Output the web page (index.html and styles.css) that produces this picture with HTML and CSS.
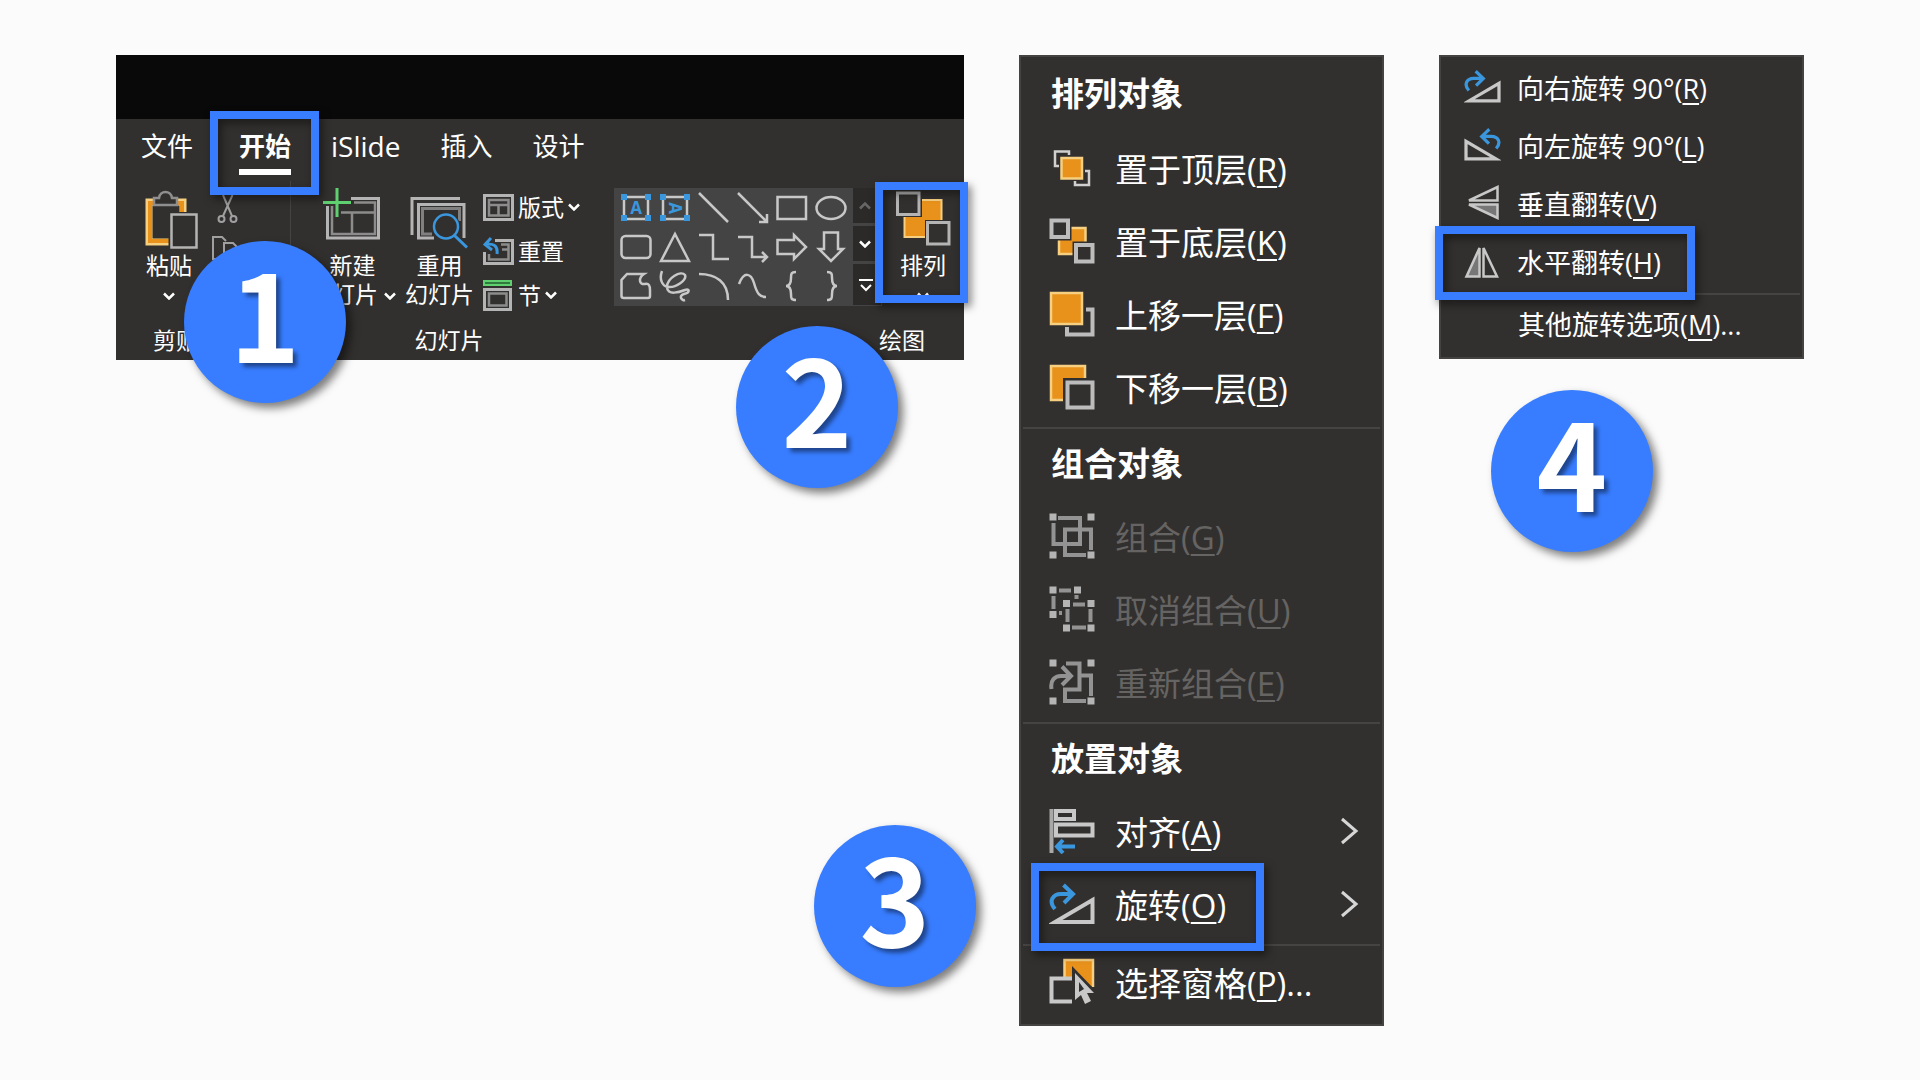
FILE: index.html
```html
<!DOCTYPE html>
<html lang="zh-CN">
<head>
    <meta charset="UTF-8">
    <title>水平翻转</title>
    <link rel="stylesheet" href="styles.css">
</head>
<body>
    <svg class="defs" aria-hidden="true">
        <symbol id="chevron" viewBox="0 0 12 8"><path d="M1 1.5L6 6.5L11 1.5" fill="none" stroke="currentColor" stroke-width="2.500"/></symbol>
        <symbol id="arrow" viewBox="0 0 20 28"><path d="M2 2L16 14L2 26" fill="none" stroke="#d6d6d6" stroke-width="3"/></symbol>
        <symbol id="rotate-right" viewBox="0 0 46 46">
            <path d="M6 41H43.500V19Z" fill="none" stroke="#c8c8c8" stroke-width="4"/>
            <path d="M6 28C-1 20 4 13 12 13H23M14.500 4L24 13L15 22" fill="none" stroke="#3a96dd" stroke-width="4"/>
        </symbol>
    </svg>

    <main class="page">
        <section class="panel ribbon">
            <div class="titlebar"></div>
            <nav class="tabs">
                <button class="tab">文件</button>
                <button class="tab active">开始<span class="mark mark-tab"></span></button>
                <button class="tab latin">iSlide</button>
                <button class="tab">插入</button>
                <button class="tab">设计</button>
            </nav>
            <div class="groups">
                <div class="group clipboard">
                    <div class="tools">
                        <button class="big">
                            <svg width="54" height="62" viewBox="0 -4 54 62" fill="none">
                                <path d="M38 22V11H4V51H24" stroke="#f6cf80" stroke-width="7"/>
                                <path d="M37 22V12H5V50H24" stroke="#e8921c" stroke-width="4"/>
                                <path d="M9 14V7H14C15 -1 26 -1 27 7H32V14Z" fill="#32302f" stroke="#8f8f8f" stroke-width="2.500"/>
                                <path d="M26 23.500H51.500V56.500H26Z" fill="#32302f" stroke="#32302f" stroke-width="5"/>
                                <path d="M26.500 23.500H51.500V56.500H26.500Z" fill="#32302f" stroke="#b4b4b4" stroke-width="2.500"/>
                            </svg>
                            <span>粘贴</span>
                            <span><svg class="chev"><use href="#chevron"/></svg></span>
                        </button>
                        <div class="edit">
                            <button aria-label="剪切"><svg width="21" height="28" viewBox="0 0 21 28" fill="none" stroke="#a0a0a0" stroke-width="2"><path d="M6 0L15 21M15.500 0L6 21"/><circle cx="4.500" cy="24" r="3"/><circle cx="16.500" cy="24" r="3"/></svg></button>
                            <button aria-label="复制"><svg width="28" height="30" viewBox="0 0 28 30" fill="none" stroke="#a0a0a0" stroke-width="2"><path d="M10 24H1V2H10L14 6M12 29V8H21L27 14V29Z"/></svg></button>
                        </div>
                    </div>
                    <div class="caption">剪贴板</div>
                </div>

                <div class="group slides">
                    <div class="tools">
                        <button class="big">
                            <svg width="60" height="62" viewBox="0 0 60 62" fill="none">
                                <path d="M29 11.500H56.500V51H5.500V19" stroke="#b4b4b4" stroke-width="3"/>
                                <path d="M32 15.500H53V47H10V19M19 25.500H53M30 25.500V47" stroke="#8c8c8c" stroke-width="2.500"/>
                                <path d="M15 1V30M1 15.500H29" stroke="#5fd070" stroke-width="3"/>
                            </svg>
                            <span>新建</span>
                            <span>幻灯片 <svg class="chev"><use href="#chevron"/></svg></span>
                        </button>
                        <button class="big">
                            <svg width="60" height="62" viewBox="0 -8 60 62" fill="none">
                                <path d="M3 40V3.500H51" stroke="#b4b4b4" stroke-width="3"/>
                                <path d="M25 43H9.500V9.500H55V43" stroke="#b4b4b4" stroke-width="3"/>
                                <path d="M23 39H13.500V13.500H50.500V26" stroke="#808080" stroke-width="3"/>
                                <circle cx="37" cy="31.500" r="14" fill="#32302f"/>
                                <path d="M46 41L58 53" stroke="#32302f" stroke-width="7"/>
                                <circle cx="37" cy="31.500" r="12" stroke="#3a96dd" stroke-width="2.500"/>
                                <path d="M45.500 40.500L58 52.500" stroke="#3a96dd" stroke-width="3"/>
                            </svg>
                            <span>重用</span>
                            <span>幻灯片</span>
                        </button>
                        <div class="list">
                            <button class="small">
                                <svg width="31" height="31" viewBox="0 0 31 31" fill="none">
                                    <path d="M1.500 3.500H29.500V27.500H1.500Z" stroke="#b4b4b4" stroke-width="3"/>
                                    <path d="M6 8H25.500V23.500H6ZM6 13H26M15.500 13V24" stroke="#8c8c8c" stroke-width="2.500"/>
                                </svg>
                                版式 <svg class="chev"><use href="#chevron"/></svg>
                            </button>
                            <button class="small">
                                <svg width="31" height="31" viewBox="0 0 31 31" fill="none">
                                    <path d="M12 4.500H29.500V27.500H1.500V16" stroke="#b4b4b4" stroke-width="3"/>
                                    <path d="M18 8.500H25.500V23.500H6V18M19 13.500H26" stroke="#8c8c8c" stroke-width="2.500"/>
                                    <path d="M8 2L2 8.500L9 14M2 8.500C11 7 15 10 14 18" stroke="#3a96dd" stroke-width="3"/>
                                </svg>
                                重置
                            </button>
                            <button class="small">
                                <svg width="31" height="31" viewBox="0 0 31 31" fill="none">
                                    <path d="M1 1H28V5H1Z" fill="#2f7a3c" stroke="#5fd070" stroke-width="2"/>
                                    <path d="M1.500 9.500H27.500V29.500H1.500Z" stroke="#b4b4b4" stroke-width="3"/>
                                    <path d="M6 13.500H23.500V25.500H6Z" stroke="#8c8c8c" stroke-width="2.500"/>
                                </svg>
                                节 <svg class="chev"><use href="#chevron"/></svg>
                            </button>
                        </div>
                    </div>
                    <div class="caption">幻灯片</div>
                </div>

                <div class="group drawing">
                    <div class="tools">
                        <div class="gallery">
                            <div class="shapes">
                                <button aria-label="文本框"><svg viewBox="0 0 32 32"><path d="M4 5H28V27H4Z"/><path class="handle" d="M1 2h6v6h-6zM25 2h6v6h-6zM1 23h6v6h-6zM25 23h6v6h-6z"/><text x="16" y="22">A</text></svg></button>
                                <button aria-label="竖排文本框"><svg viewBox="0 0 32 32"><path d="M4 5H28V27H4Z"/><path class="handle" d="M1 2h6v6h-6zM25 2h6v6h-6zM1 23h6v6h-6zM25 23h6v6h-6z"/><text x="16" y="22" transform="rotate(90 16 16)">A</text></svg></button>
                                <button aria-label="直线"><svg viewBox="0 0 32 32"><path d="M1 1L30 30"/></svg></button>
                                <button aria-label="箭头"><svg viewBox="0 0 32 32"><path d="M1 1L30 30M30 22V30H22"/></svg></button>
                                <button aria-label="矩形"><svg viewBox="0 0 32 32"><path d="M1.500 5H30V27H1.500Z"/></svg></button>
                                <button aria-label="椭圆"><svg viewBox="0 0 32 32"><ellipse cx="16" cy="16" rx="14.500" ry="11"/></svg></button>
                                <button aria-label="圆角矩形"><svg viewBox="0 0 32 32"><rect x="1.500" y="5" width="29" height="22" rx="4"/></svg></button>
                                <button aria-label="三角形"><svg viewBox="0 0 32 32"><path d="M16 3L30 30H2Z"/></svg></button>
                                <button aria-label="肘形连接符"><svg viewBox="0 0 32 32"><path d="M1 4H15V28H31"/></svg></button>
                                <button aria-label="肘形箭头"><svg viewBox="0 0 32 32"><path d="M1 6H15V26H30M25 21L30 26L25 31"/></svg></button>
                                <button aria-label="右箭头"><svg viewBox="0 0 32 32"><path d="M1.500 9H18V4L30 16L18 28V23H1.500Z"/></svg></button>
                                <button aria-label="下箭头"><svg viewBox="0 0 32 32"><path d="M9 1.500H23V18H28L16 30L4 18H9Z"/></svg></button>
                                <button aria-label="任意多边形"><svg viewBox="0 0 32 32"><path d="M7 4H24C18 8 19 15 25 14C29 13 30 16 30 20V26Q30 28 28 28H4Q1.500 28 1.500 26V10Z"/></svg></button>
                                <button aria-label="自由曲线"><svg viewBox="0 0 32 32"><path d="M3 1C0 9 3 16 9 17C17 18 28 10 26 5C22 0 8 8 8 17C8 26 21 22 26 20C31 18 31 23 25 24C19 26 23 31 26 30"/></svg></button>
                                <button aria-label="弧形"><svg viewBox="0 0 32 32"><path d="M1 4C18 4 30 12 30 30"/></svg></button>
                                <button aria-label="曲线"><svg viewBox="0 0 32 32"><path d="M2 14C7 1 14 3 17 13C20 24 23 27 29 27"/></svg></button>
                                <button aria-label="左大括号"><svg viewBox="0 0 32 32"><path d="M20 2C15 2 15 4 15 8C15 13 14 16 10 16C14 16 15 19 15 24C15 28 15 30 20 30"/></svg></button>
                                <button aria-label="右大括号"><svg viewBox="0 0 32 32"><path d="M12 2C17 2 17 4 17 8C17 13 18 16 22 16C18 16 17 19 17 24C17 28 17 30 12 30"/></svg></button>
                            </div>
                            <div class="scroll">
                                <button class="dim" aria-label="上一行"><svg class="chev up"><use href="#chevron"/></svg></button>
                                <button aria-label="下一行"><svg class="chev"><use href="#chevron"/></svg></button>
                                <button aria-label="更多"><svg width="14" height="14" viewBox="0 0 14 14" fill="none" stroke="#fff" stroke-width="2"><path d="M0 2H14M2 7L7 12L12 7"/></svg></button>
                            </div>
                        </div>
                        <button class="big arrange">
                            <svg width="56" height="62" viewBox="0 0 56 62">
                                <path d="M9.500 13H46.500V50H9.500Z" fill="#e8921c" stroke="#f6cf80" stroke-width="2"/>
                                <path d="M0 3H27V30H0ZM30 33H56V59H30Z" fill="#32302f"/>
                                <path d="M2.500 6H24V27.500H2.500ZM32.500 35.500H54V57H32.500Z" fill="#32302f" stroke="#b4b4b4" stroke-width="3"/>
                            </svg>
                            <span>排列</span>
                            <span><svg class="chev"><use href="#chevron"/></svg></span>
                            <span class="mark mark-arrange"></span>
                        </button>
                    </div>
                    <div class="caption">绘图</div>
                </div>
            </div>
            <div class="badge one">1</div>
            <div class="badge two">2</div>
        </section>

        <section class="panel menu">
            <h2 class="first">排列对象</h2>
            <button class="item">
                <svg viewBox="0 0 46 46" fill="none">
                    <path d="M20 10V6.500H6V21H10M36 26H40V40H26V36" stroke="#d0d0d0" stroke-width="2.500"/>
                    <path d="M12.500 13H33V33.500H12.500Z" fill="#e8921c" stroke="#f6cf80" stroke-width="2.500"/>
                </svg>
                <span>置于顶层(<u>R</u>)</span>
            </button>
            <button class="item">
                <svg viewBox="0 0 46 46">
                    <path d="M10 10H36.500V36H10Z" fill="#e8921c" stroke="#f6cf80" stroke-width="2.500"/>
                    <path d="M0 0H22.500V22.500H0ZM23.500 23.500H46V46H23.500Z" fill="#32302f"/>
                    <path d="M2.500 2.500H19V19H2.500ZM27 27H43.500V43.500H27Z" fill="#32302f" stroke="#bcbcbc" stroke-width="4"/>
                </svg>
                <span>置于底层(<u>K</u>)</span>
            </button>
            <button class="item">
                <svg viewBox="0 0 46 46" fill="none">
                    <path d="M37 18.500H43.500V43.500H18V36" stroke="#bcbcbc" stroke-width="4"/>
                    <path d="M2 2H33V33H2Z" fill="#e8921c" stroke="#f6cf80" stroke-width="2.500"/>
                </svg>
                <span>上移一层(<u>F</u>)</span>
            </button>
            <button class="item">
                <svg viewBox="0 0 46 46">
                    <path d="M2 2H36V36H2Z" fill="#e8921c" stroke="#f6cf80" stroke-width="2.500"/>
                    <path d="M14 14H46V46H14Z" fill="#32302f"/>
                    <path d="M18.500 18.500H43.500V43.500H18.500Z" fill="none" stroke="#bcbcbc" stroke-width="4"/>
                </svg>
                <span>下移一层(<u>B</u>)</span>
            </button>
            <hr>
            <h2>组合对象</h2>
            <button class="item" disabled>
                <svg viewBox="0 0 46 46" fill="none">
                    <path d="M9 5H31V31H4.500V10M42 37V16.500H16V42H37" stroke="#939393" stroke-width="4"/>
                    <path d="M0.500 0.500h7v7h-7zM38.500 0.500h7v7h-7zM0.500 38.500h7v7h-7zM38.500 38.500h7v7h-7z" fill="#b4b4b4"/>
                </svg>
                <span>组合(<u>G</u>)</span>
            </button>
            <button class="item" disabled>
                <svg viewBox="0 0 46 46" fill="none">
                    <path d="M10 4.500H22M4.500 10V23M27.500 9V13M10 27H13M24 18.500H36M18.500 23V36M41.500 23V36M23 41.500H37" stroke="#939393" stroke-width="4"/>
                    <path d="M0.500 0.500h7v7h-7zM25 0.500h7v7h-7zM0.500 25h7v7h-7zM14 14h7v7h-7zM38.500 14h7v7h-7zM14 38.500h7v7h-7zM38.500 38.500h7v7h-7z" fill="#b4b4b4"/>
                </svg>
                <span>取消组合(<u>U</u>)</span>
            </button>
            <button class="item" disabled>
                <svg viewBox="0 0 46 46" fill="none">
                    <path d="M17 4.500H30.500V30.500H16V42H37M30.500 16.500H42V37M2.500 30C1 21 6 17 12 17H21M13 7.500L22 17L13 26" stroke="#939393" stroke-width="4"/>
                    <path d="M0.500 0.500h7v7h-7zM38.500 0.500h7v7h-7zM0.500 38.500h7v7h-7zM38.500 38.500h7v7h-7z" fill="#b4b4b4"/>
                </svg>
                <span>重新组合(<u>E</u>)</span>
            </button>
            <hr>
            <h2>放置对象</h2>
            <button class="item">
                <svg viewBox="0 0 46 46" fill="none">
                    <path d="M2.500 1V45" stroke="#a8a8a8" stroke-width="4"/>
                    <path d="M7 3H25V11H7ZM7 16.500H43.500V27.500H7Z" stroke="#c8c8c8" stroke-width="4"/>
                    <path d="M26 38.500H9M14 32L8 38.500L14 45" stroke="#3a96dd" stroke-width="4"/>
                </svg>
                <span>对齐(<u>A</u>)</span>
                <svg class="more"><use href="#arrow"/></svg>
            </button>
            <button class="item">
                <svg><use href="#rotate-right"/></svg>
                <span>旋转(<u>O</u>)</span>
                <svg class="more"><use href="#arrow"/></svg>
                <i class="mark mark-rotate"></i>
            </button>
            <hr>
            <button class="item last">
                <svg viewBox="0 0 46 46" fill="none">
                    <path d="M15.500 19V2H44V29" fill="#e8921c" stroke="#f6cf80" stroke-width="2.500"/>
                    <path d="M23 8V46H46V32Z" fill="#32302f"/>
                    <path d="M23 20.500H2.500V43.500H23" stroke="#c8c8c8" stroke-width="4"/>
                    <path d="M26 15V42L32 37L36 46L42 43L38 35H45Z" fill="#c8c8c8"/>
                    <path d="M30 24V34L35 31Z" fill="#32302f"/>
                </svg>
                <span>选择窗格(<u>P</u>)...</span>
            </button>
            <div class="badge three">3</div>
        </section>

        <div class="side">
            <section class="panel submenu">
                <button class="item">
                    <svg><use href="#rotate-right"/></svg>
                    <span>向右旋转 90°(<u>R</u>)</span>
                </button>
                <button class="item">
                    <svg viewBox="0 0 46 46"><use href="#rotate-right" width="46" height="46" transform="matrix(-1 0 0 1 46 0)"/></svg>
                    <span>向左旋转 90°(<u>L</u>)</span>
                </button>
                <button class="item">
                    <svg viewBox="0 0 37 37" stroke="#c8c8c8" stroke-width="2.500"><path d="M5 16.500L33.500 3V16.500Z" fill="none"/><path d="M5 20.500L33.500 34V20.500Z" fill="#777"/></svg>
                    <span>垂直翻转(<u>V</u>)</span>
                </button>
                <button class="item">
                    <svg viewBox="0 0 37 37" stroke="#c8c8c8" stroke-width="2.500"><path d="M15.500 6V34.500H2.500Z" fill="#777"/><path d="M19.500 6V34.500H33Z" fill="none"/></svg>
                    <span>水平翻转(<u>H</u>)</span>
                    <i class="mark mark-flip"></i>
                </button>
                <hr>
                <button class="item plain"><span>其他旋转选项(<u>M</u>)...</span></button>
            </section>
            <div class="badge">4</div>
        </div>
    </main>
</body>
</html>
```

FILE: styles.css
```css
* {
    box-sizing: border-box;
}
body {
    margin: 0;
    background: #fbfbfb;
    color: #fff;
    font-family: "Open Sans", "Noto Sans CJK SC", sans-serif;
}
button {
    position: relative;
    margin: 0;
    padding: 0;
    border: 0;
    background: none;
    color: inherit;
    font: inherit;
    white-space: nowrap;
}
svg {
    display: block;
    flex: none;
}
.defs {
    position: absolute;
    width: 0;
    height: 0;
}
.page {
    display: grid;
    grid-template-columns: 848fr 365fr 365fr;
    gap: 55px;
    align-items: start;
    padding: 55px 116px;
}
.panel {
    position: relative;
    background: #32302f;
}

/* ribbon */
.titlebar {
    height: 64px;
    background: #090909;
}
.tabs {
    display: flex;
    gap: 40px;
    height: 62px;
    padding-left: 25px;
    font-size: 26px;
}
.tab {
    height: 56px;
    padding-top: 4px;
    border-bottom: 6px solid transparent;
    line-height: 46px;
}
.tab.active {
    margin-left: 6px;
    border-color: #fff;
    font-weight: bold;
}
.tab.latin {
    font-size: 28px;
}
.groups {
    display: flex;
    font-size: 23px;
    line-height: 29px;
}
.group {
    display: flex;
    flex-direction: column;
}
.tools {
    display: flex;
    height: 142px;
}
.caption {
    height: 37px;
    padding-top: 3px;
}
.clipboard {
    width: 175px;
    border-right: 1px solid #454443;
}
.clipboard .tools {
    padding-left: 29px;
    gap: 13px;
}
.clipboard .caption {
    padding-left: 37px;
}
.clipboard .big > span {
    padding-right: 6px;
}
.slides {
    width: 316px;
    text-align: center;
}
.slides .tools {
    gap: 9px;
    padding-left: 18px;
}
.drawing {
    flex: 1;
    padding-left: 7px;
}
.drawing .caption {
    padding-left: 265px;
}
.big {
    display: flex;
    flex-direction: column;
    align-items: center;
    padding-top: 6px;
}
.big > svg {
    margin-bottom: 2px;
}
.big > span {
    min-height: 29px;
}
.chev {
    display: inline-block;
    width: 12px;
    height: 8px;
    vertical-align: 3px;
}
.chev.up {
    transform: scaleY(-1);
}
.edit {
    display: flex;
    flex-direction: column;
    align-items: flex-start;
    gap: 12px;
    padding-top: 14px;
}
.edit button:first-child {
    padding-left: 5px;
}
.list {
    padding-top: 4px;
}
.small {
    display: flex;
    align-items: center;
    gap: 4px;
    height: 44px;
}
.gallery {
    display: flex;
    gap: 3px;
    height: 118px;
    margin-top: 7px;
    padding: 0 1px 1px 2px;
    background: #444;
}
.shapes {
    display: grid;
    grid-template-columns: repeat(6, 39px);
    grid-template-rows: repeat(3, 39px);
}
.shapes button {
    display: grid;
    place-items: center;
}
.shapes svg {
    width: 32px;
    height: 32px;
    fill: none;
    stroke: #c8c8c8;
    stroke-width: 2.5px;
}
.shapes .handle {
    fill: #3a96dd;
    stroke: none;
}
.shapes text {
    fill: #3a96dd;
    stroke: none;
    font-size: 17px;
    font-weight: bold;
    text-anchor: middle;
}
.scroll {
    display: grid;
    gap: 3px;
    width: 28px;
}
.scroll button {
    display: flex;
    align-items: center;
    padding-left: 6px;
    background: #2c2a29;
}
.scroll .dim {
    color: #666;
}
.arrange {
    flex: 1;
}

/* menus */
.menu,
.submenu {
    display: flex;
    flex-direction: column;
    border: 2px solid #444342;
}
.menu {
    font-size: 33px;
}
.menu h2 {
    margin: 0;
    padding: 0 30px 4px;
    font-size: 33px;
    line-height: 70px;
}
.menu h2.first {
    line-height: 74px;
}
hr {
    width: calc(100% - 4px);
    height: 2px;
    margin: 0 auto;
    border: 0;
    background: #454443;
}
.item {
    display: flex;
    align-items: center;
    gap: 20px;
    height: 73px;
    padding-left: 28px;
    line-height: 48px;
}
.item:disabled {
    color: #666462;
}
.item svg {
    width: 46px;
    height: 46px;
    margin-bottom: 8px;
}
.item span {
    padding-bottom: 3px;
}
.item u {
    text-decoration-thickness: 2px;
    text-underline-offset: 4px;
}
.item .more {
    width: 20px;
    height: 28px;
    margin-left: auto;
    margin-right: 22px;
}
.item.last {
    height: 78px;
}
.submenu {
    padding-top: 4px;
    font-size: 27px;
}
.submenu .item {
    gap: 16px;
    height: 58px;
    padding-left: 23px;
}
.submenu svg {
    width: 37px;
    height: 37px;
}
.submenu .plain {
    height: 62px;
    padding-left: 77px;
}

/* numbered steps and blue frames */
.mark {
    position: absolute;
    z-index: 1;
    border: 8px solid #387dff;
    filter: drop-shadow(3px 4px 4px rgba(0, 0, 0, 0.5));
}
.mark-tab {
    top: -8px;
    left: -29px;
    width: 109px;
    height: 84px;
}
.mark-arrange {
    top: 1px;
    right: -4px;
    width: 93px;
    height: 121px;
}
.mark-rotate {
    top: -8px;
    left: 10px;
    width: 233px;
    height: 88px;
}
.mark-flip {
    top: -9px;
    left: -6px;
    width: 260px;
    height: 74px;
}
.badge {
    z-index: 2;
    width: 162px;
    height: 162px;
    border-radius: 50%;
    background: #387dff;
    box-shadow: 5px 5px 8px rgba(0, 0, 0, 0.5);
    font-family: "Noto Sans CJK SC", sans-serif;
    font-size: 120px;
    font-weight: bold;
    line-height: 140px;
    text-align: center;
    text-shadow: 4px 4px 4px rgba(0, 0, 0, 0.45);
}
.one,
.two,
.three {
    position: absolute;
}
.one {
    top: 186px;
    left: 68px;
}
.two {
    top: 271px;
    left: 620px;
}
.three {
    top: 768px;
    left: -207px;
}
.side .badge {
    margin: 31px 0 0 52px;
}
```
